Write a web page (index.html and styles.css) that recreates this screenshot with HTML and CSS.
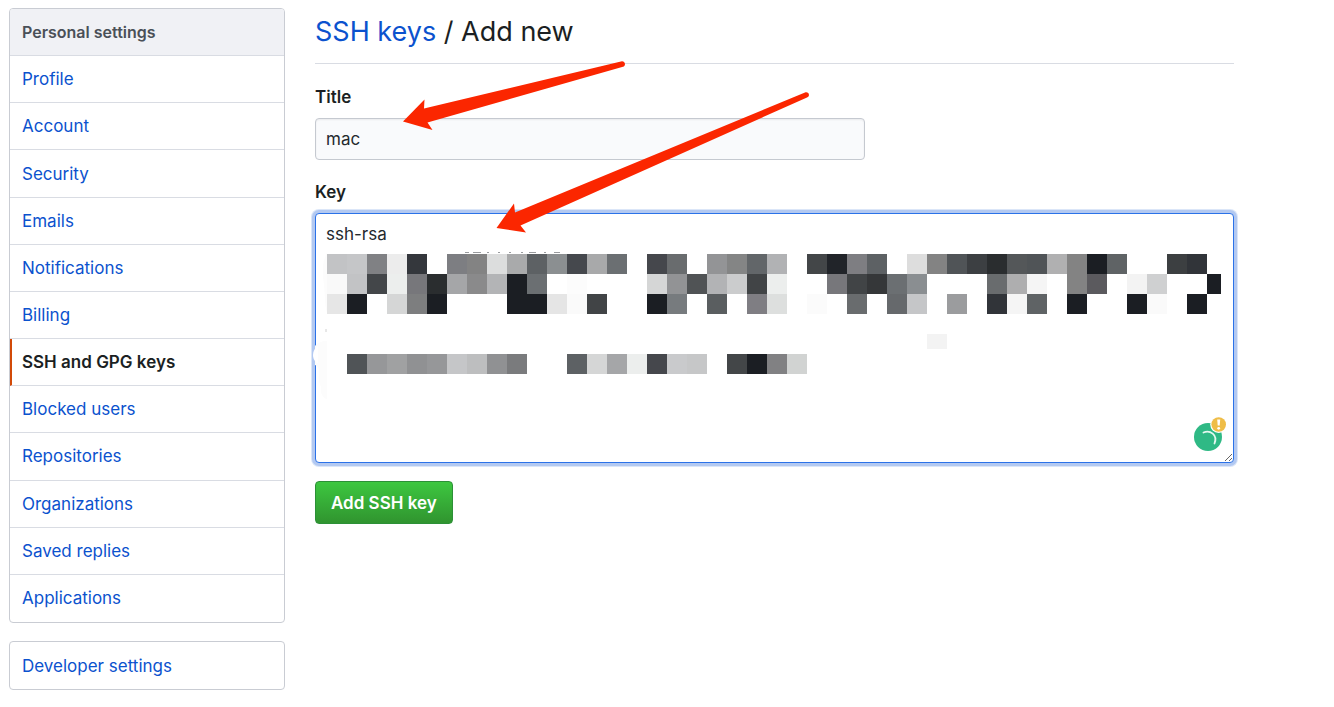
FILE: index.html
```html
<!DOCTYPE html>
<html lang="en">
<head>
<meta charset="utf-8">
<title>Add new SSH key</title>
<link rel="stylesheet" href="styles.css">
</head>
<body>
<div class="page">
  <aside class="sidebar">
    <nav class="menu menu-personal" aria-label="Personal settings">
      <h2 class="menu-heading">Personal settings</h2>
      <a class="menu-item" href="#">Profile</a>
      <a class="menu-item" href="#">Account</a>
      <a class="menu-item" href="#">Security</a>
      <a class="menu-item" href="#">Emails</a>
      <a class="menu-item" href="#">Notifications</a>
      <a class="menu-item" href="#">Billing</a>
      <a class="menu-item selected" href="#" aria-current="page">SSH and GPG keys</a>
      <a class="menu-item" href="#">Blocked users</a>
      <a class="menu-item" href="#">Repositories</a>
      <a class="menu-item" href="#">Organizations</a>
      <a class="menu-item" href="#">Saved replies</a>
      <a class="menu-item" href="#">Applications</a>
    </nav>
    <nav class="menu" aria-label="Developer settings">
      <a class="menu-item" href="#">Developer settings</a>
    </nav>
  </aside>
  <main class="content">
    <h1 class="title"><a href="#">SSH keys</a> / Add new</h1>
    <form class="form">
      <label class="label" for="key-title">Title</label>
      <input class="field" id="key-title" type="text" value="mac">
      <label class="label" for="key-body">Key</label>
      <div class="key-wrap">
        <textarea class="field key-body" id="key-body" spellcheck="false">ssh-rsa</textarea>
        <svg class="mosaic" width="919" height="250" viewBox="315 213 919 250" aria-hidden="true">
          <path d="M327 253c-5 8-5 20-3 32 1 12 1 22 3 28z" fill="#fcfcfc"/>
          <path d="M327 341c-5 0-10 2-12 5v19c3 1 5 4 4 9s0 9 2 13c-1 5 1 11 6 12z" fill="#fcfcfc"/>
          <path d="M465 252.500h4M473 252.500h8M487 252.500h2M498 252.500h2M509 252.500h2M521 252.500h2M529 252.500h7M544 252.500h2M554 252.500h6" stroke="#999b9e"/>
          <path d="M326 329v3" stroke="#d0d0d0"/>
          <g id="cells" shape-rendering="crispEdges"></g>
        </svg>
        <svg class="checker" width="34" height="36" viewBox="1193 416 34 36" aria-hidden="true">
          <circle cx="1208" cy="437" r="14" fill="#2fb985"/>
          <path d="M1203.500 432.500C1210 429.500 1218 435 1214.500 443.500" fill="none" stroke="#e4f7ef" stroke-width="1.800" stroke-linecap="round"/>
          <circle cx="1218.700" cy="424.500" r="8.500" fill="#fff"/>
          <circle cx="1218.700" cy="424.500" r="7.300" fill="#efbd48"/>
          <path d="M1217.200 419.500h3l-.5 6h-2z" fill="#fff"/>
          <circle cx="1218.700" cy="428.300" r="1.400" fill="#fff"/>
        </svg>
        <svg class="gap" width="6" height="18" viewBox="0 0 6 18" aria-hidden="true"><path d="M6 0C3 2 1 5 1 9s2 7 5 8z" fill="#fff"/></svg>
      </div>
      <button class="submit" type="button">Add SSH key</button>
    </form>
  </main>
</div>
<svg class="arrows" width="820" height="240" viewBox="0 0 820 240" fill="#fb2600" aria-hidden="true">
  <path d="M403 121.500L424.500 99.500L424 108.500L622 61.300C625.500 61.300 626 66 623 66.700L427.500 122.500L432.500 130Z"/>
  <path d="M496.500 228L514 203.500L515 212.500L805 92.500C809 91.500 810.500 96 807 97.500L520.500 225.500L526 232.500Z"/>
</svg>
<script src="cells.js"></script>
</body>
</html>
```
FILE: cells.js
```js
// Each row: top, height, then colours from left to right; "-" leaves a cell empty.
const rows = [
  [254, 20, "c2c3c5 c5c6c8 808184 ececec 34373c - 7d7e82 838383 dcdddd a9aaab 5d6164 8b8f91 45484d a8a9aa 6b6f72 - 45474c 696c6e - 939496 848585 626669 b1b2b4 - 434648 212429 7e7e82 5d6164 - dddddd 838383 505457 3c3f42 2a2d2f 545759 505457 b0b0b1 838383 1b1e23 5f6365 - - 3c3f41 313439"],
  [274, 20, "f9f9f9 c2c3c5 434649 eceeed 77777b 2a2d2f a5a6a8 8a8a8b b3b4b6 1b1e23 6b6f72 - fcfcfc - - - d5d6d6 929395 505355 b2b3b5 cbcccd 414446 eceeed - - 77777b 414446 353739 6b6f72 8a8e91 - - - 696c6e aeaeaf f5f5f5 - 838383 5b5a5e - f3f3f3 cfd0d1 - - 1b1e23"],
  [294, 20, "e6e6e6 1b1e23 - d5d6d6 7d7e7f 1b1e23 - - - 1b1e23 1b1e23 e5e5e5 fafafa 414446 - - 1b1e23 777b7e - 5a5e60 - 7f7e83 dddfde - fbfbfb - 696c6e - 66696c c5c6c8 - 9b9c9e - 313439 f5f5f5 5f6365 - 1b1e23 - - 1b1e23 fafafa - 1b1e23"],
  [334, 15, "- ".repeat(30) + "f3f3f3"],
  [354, 20, "- 505457 969799 a0a1a2 909193 969799 c5c6c8 bdbebf 909193 7a7b7d - - 5d6164 d5d6d6 a5a6a8 eceeed 45474c c9cacc c6c7c8 - 434648 1b1e23 818183 d1d3d2"]
];
const group = document.getElementById("cells");
for (const [top, height, colours] of rows) {
  colours.split(" ").forEach((colour, i) => {
    if (colour === "-") return;
    const cell = document.createElementNS("http://www.w3.org/2000/svg", "rect");
    cell.setAttribute("x", 327 + i * 20);
    cell.setAttribute("y", top);
    cell.setAttribute("width", i === 44 ? 14 : 20);
    cell.setAttribute("height", height);
    cell.setAttribute("fill", "#" + colour);
    group.append(cell);
  });
}
```
FILE: styles.css
```css
* { box-sizing: border-box; }
body {
  margin: 0;
  background: #fff;
  color: #24292e;
  font-family: Inter, "Liberation Sans", sans-serif;
  font-size: 17px;
  line-height: 24px;
}
a { color: #0b52ce; text-decoration: none; }
.page {
  display: grid;
  grid-template-columns: 276px 1fr;
  gap: 30px;
  padding: 8px 100px 16px 9px;
}
.sidebar { display: flex; flex-direction: column; gap: 18px; }
.menu {
  display: grid;
  grid-auto-rows: 1fr;
  border: 1px solid #c9ccd3;
  border-radius: 4px;
  overflow: hidden;
}
.menu-personal { min-height: 615px; }
.menu-heading, .menu-item {
  display: flex;
  align-items: center;
  margin: 0;
  padding: 11px 12px;
  border-bottom: 1px solid #d9dce3;
}
.menu > :last-child { border-bottom: 0; }
.menu-heading {
  background: #f0f1f5;
  color: #4a5058;
  font-size: 16px;
  font-weight: 600;
}
.menu-item.selected {
  padding-left: 10px;
  border-left: 2px solid #d24a08;
  color: #1b1f23;
  font-weight: 600;
}
.menu:not(.menu-personal) .menu-item { padding: 12px 12px 11px; }
.title {
  margin: 0 0 21px;
  padding: 4px 0 11px;
  border-bottom: 1px solid #d9dce3;
  color: #1b1f23;
  font-size: 27px;
  font-weight: 400;
  line-height: 40px;
}
.form { display: flex; flex-direction: column; align-items: flex-start; }
.label { margin-bottom: 9px; color: #1b1f23; font-weight: 600; }
.field {
  width: 100%;
  max-width: 550px;
  height: 42px;
  margin: 0 0 20px;
  padding: 8px 10px;
  border: 1px solid #c5c9d0;
  border-radius: 4px;
  background: #f9fafc;
  box-shadow: inset 0 1px 2px #1b1f2312;
  color: #24292e;
  font: inherit;
  outline: 0;
}
.key-wrap { position: relative; width: 100%; }
.key-body {
  display: block;
  max-width: none;
  height: 250px;
  margin-bottom: 18px;
  border-color: #2b72e8;
  background: #fff;
  box-shadow: 0 0 0 3px #b3c9f1, 0 0 0 4px #dbe6f8;
}
.mosaic { position: absolute; top: 0; left: 0; pointer-events: none; }
.checker { position: absolute; right: 7px; top: 203px; pointer-events: none; }
.gap { position: absolute; left: -3px; top: 133px; pointer-events: none; }
.submit {
  padding: 9px 15px 8px;
  border: 1px solid #2c9037;
  border-radius: 4px;
  background: linear-gradient(#3dc740, #30942f);
  color: #fff;
  font: inherit;
  font-weight: 600;
  cursor: pointer;
}
.arrows { position: absolute; left: 0; top: 0; pointer-events: none; }
```
